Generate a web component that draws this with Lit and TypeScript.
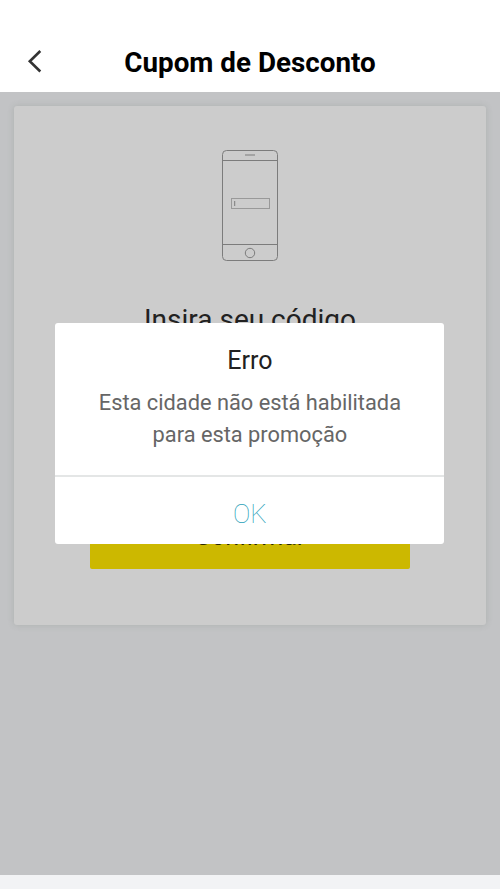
import { LitElement, html, css } from "lit";
import { customElement } from "lit/decorators.js";

@customElement("app-root")
export class AppRoot extends LitElement {
  static styles = css`
    :host {
      display: flex;
      flex-direction: column;
      position: relative;
      height: 100vh;
      overflow: hidden;
      background: #f2f3f5;
      font-family: Roboto, "Liberation Sans", sans-serif;
      color: #212121;
    }
    * { box-sizing: border-box; }
    h1, h2, p { margin: 0; font-weight: 400; }
    header {
      display: grid;
      grid-template-columns: 70px 1fr 70px;
      align-items: center;
      height: 92px;
      padding-top: 34px;
      background: #fff;
      flex: none;
    }
    .back {
      border: 0;
      padding: 0;
      background: none;
      height: 24px;
      margin: 0 0 5px 27px;
      width: 16px;
    }
    svg { display: block; }
    .title {
      font-size: 27.8px;
      line-height: 58px;
      font-weight: 700;
      color: #000;
      text-align: center;
      white-space: nowrap;
    }
    main {
      flex: none;
      height: 783px;
      padding: 14px 14px 0;
      background: #c2c3c5;
    }
    .card {
      display: flex;
      flex-direction: column;
      align-items: center;
      height: 519px;
      padding-top: 43px;
      border-radius: 3px;
      background: #ccc;
      box-shadow: 0 0 6px rgba(100, 115, 100, 0.22);
    }
    .phone { flex: none; }
    .prompt {
      margin-top: 37px;
      font-size: 28px;
      line-height: 40px;
      white-space: nowrap;
    }
    .confirm {
      flex: none;
      width: 320px;
      height: 64px;
      margin-top: 165px;
      border: 0;
      border-radius: 2px;
      background: #ccb800;
      font: 400 25px/64px Roboto, sans-serif;
      color: #2b2800;
      padding: 0;
    }
    .dialog {
      position: absolute;
      left: 55.4px;
      top: 323.4px;
      width: 389px;
      height: 221px;
      border-radius: 3px;
      background: #fff;
      text-align: center;
      display: flex;
      flex-direction: column;
    }
    .dialog-title {
      padding-top: 21px;
      font-size: 25px;
      line-height: 34px;
    }
    .message {
      padding-top: 9px;
      font-size: 21.8px;
      line-height: 32px;
      color: #666;
      height: 97px;
      white-space: nowrap;
    }
    .ok {
      flex: 1;
      border: 0;
      border-top: 2px solid #e4e6e6;
      background: none;
      padding: 6px 0 0;
      font: 100 26px/30px Roboto, sans-serif;
      color: #28a0b8;
    }
  `;

  render() {
    return html`
      <header>
        <button class="back" aria-label="Voltar">
          <svg width="16" height="24" viewBox="0 0 16 24" fill="none" stroke="#333" stroke-width="2.6">
            <path d="M13.3 2 L2.8 12.3 L13.3 22.5" />
          </svg>
        </button>
        <h1 class="title">Cupom de Desconto</h1>
      </header>
      <main>
        <section class="card">
          <svg class="phone" width="58" height="114" viewBox="0 0 58 114" fill="none" stroke="#7c7c7c" stroke-width="1">
            <rect x="1.5" y="1.5" width="55" height="110" rx="4" />
            <path d="M1.5 11.5H56.5M1.5 95.5H56.5M24 6H34" />
            <rect x="10.5" y="49.5" width="38" height="10" stroke="#999" />
            <path d="M13.7 52V57" />
            <circle cx="29" cy="104" r="4.7" />
          </svg>
          <h2 class="prompt">Insira seu código</h2>
          <button class="confirm">Confirmar</button>
        </section>
      </main>
      <section class="dialog" role="alertdialog">
        <h2 class="dialog-title">Erro</h2>
        <p class="message">Esta cidade não está habilitada<br />para esta promoção</p>
        <button class="ok">OK</button>
      </section>
    `;
  }
}
